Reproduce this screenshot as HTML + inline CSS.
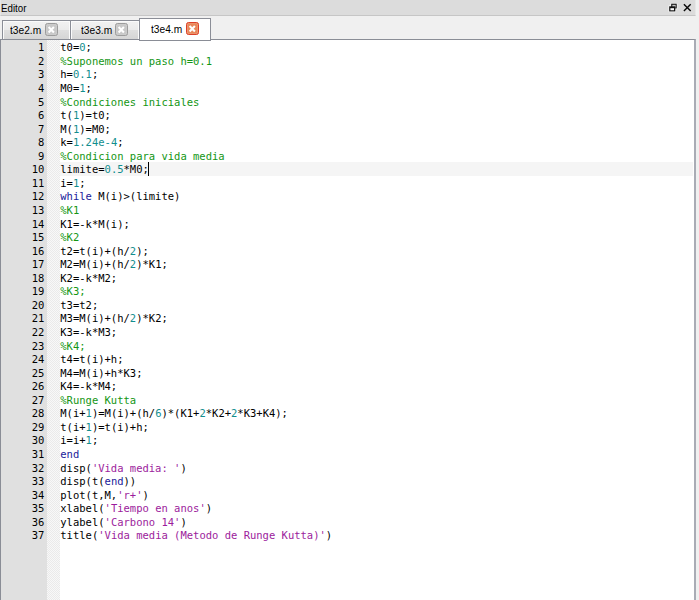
<!DOCTYPE html>
<html><head><meta charset="utf-8"><title>Editor</title>
<style>
html,body{margin:0;padding:0;}
body{width:699px;height:600px;background:#f0f0f0;position:relative;overflow:hidden;font-family:"Liberation Sans",sans-serif;font-size:11px;color:#000;}
.title{position:absolute;left:0;top:0;width:696.3px;border-right:1.7px solid #e7e7e7;height:15px;background:#dcdcdc;border-bottom:1px solid #c6c6c6;border-left:1px solid #e6e6e6;box-sizing:border-box;height:16px;}
.title span{position:absolute;left:0.2px;top:2px;line-height:13px;font-size:11px;transform:scaleX(0.885);transform-origin:0 0;}
.ico{position:absolute;top:0;left:0;}
.tab{position:absolute;box-sizing:border-box;border:1px solid #8b8e97;border-bottom:none;background:linear-gradient(#f2f2f2 0,#ebebeb 48%,#dfdfdf 52%,#d5d5d5 100%);box-shadow:inset 1px 1px 0 #fbfbfb,inset -1px 0 0 #fbfbfb;}
.tab.act{background:#fff;box-shadow:none;}
.tab .t{position:absolute;top:0;line-height:13px;font-size:11px;white-space:nowrap;transform:scaleX(0.925);transform-origin:0 0;}
.cb{position:absolute;box-sizing:border-box;width:12.8px;height:12.8px;border:1.3px solid #9c9c9c;border-radius:2.5px;background:#c8c8c8;box-shadow:inset 0 0 0 0.6px #cecece;}
.cb.red{border-color:#dc4028;background:#e8875a;box-shadow:inset 0 0 0 0.6px #eda07c;}
.cb svg{position:absolute;left:-1.2px;top:-1.2px;}
.ed{position:absolute;left:0;top:39px;width:696.2px;height:570px;box-sizing:border-box;border:1.4px solid #8a8d96;border-left-width:1.2px;border-right:2.2px solid #a9acb5;background:#fff;}
.gut{position:absolute;left:1px;top:40px;width:45.6px;height:560px;background:#e0e0e0;}
.fold{position:absolute;left:46.6px;top:40px;width:13.1px;height:560px;background-color:#efefef;
background-image:linear-gradient(45deg,#eaeaea 25%,transparent 25%,transparent 75%,#eaeaea 75%),linear-gradient(45deg,#eaeaea 25%,#f8f8f8 25%,#f8f8f8 75%,#eaeaea 75%);background-size:2px 2px;background-position:0 0,1px 1px;}
.ln{position:absolute;left:0;width:693px;height:13.556px;line-height:13.556px;font-family:"DejaVu Sans Mono","Liberation Mono",monospace;font-size:10.5px;white-space:pre;}
.ln.cur:before{content:"";position:absolute;left:59.7px;right:0;top:0;height:13.5px;background:#f5f5f5;}
.num{position:absolute;left:0;width:44.3px;text-align:right;top:1px;}
.code{position:absolute;left:60.3px;top:1px;}
.c{color:#149614}.n{color:#128e8e}.k{color:#1a1a9a}.s{color:#9c1c9c}
.caret{position:absolute;display:block;width:1.2px;height:13.4px;background:#000;right:-0.4px;top:-1px;}
</style></head><body>
<div class="title"><span>Editor</span></div>
<svg class="ico" width="699" height="16" viewBox="0 0 699 16">
<g fill="#f2f2f2" stroke="#f2f2f2" stroke-width="1.6" stroke-linejoin="round">
<rect x="671.2" y="3.9" width="5.5" height="4.5"/>
<rect x="669.2" y="6.1" width="6.1" height="5.3"/>
</g>
<rect x="671.2" y="3.7" width="5.5" height="4.7" fill="#111"/>
<rect x="672.3" y="4.8" width="3.4" height="2.8" fill="#c4c4c4"/>
<rect x="669.2" y="6.3" width="6.1" height="5.1" fill="#111"/>
<rect x="670.4" y="8.2" width="3.6" height="2.1" fill="#f8f8f8"/>
<path d="M683.9 4.3 L690.7 10.9 M690.7 4.3 L683.9 10.9" stroke="#0a0a0a" stroke-width="1.45" fill="none"/>
</svg>
<div class="tab" style="left:2px;top:20px;width:69px;height:19px"><span class="t" style="left:7.2px;top:3.2px">t3e2.m</span>
<div class="cb" style="left:42.1px;top:2.1px"><svg width="12.8" height="12.8" viewBox="0 0 12.8 12.8"><path d="M3.6 4.1L8.9 9.4M8.9 4.1L3.6 9.4" stroke="#fff" stroke-width="2.1" fill="none"/></svg></div></div>
<div class="tab" style="left:70px;top:20px;width:70px;height:19px"><span class="t" style="left:10px;top:3.2px">t3e3.m</span>
<div class="cb" style="left:44.1px;top:2.1px"><svg width="12.8" height="12.8" viewBox="0 0 12.8 12.8"><path d="M3.6 4.1L8.9 9.4M8.9 4.1L3.6 9.4" stroke="#fff" stroke-width="2.1" fill="none"/></svg></div></div>
<div class="ed"></div>
<div class="tab act" style="left:139px;top:18px;width:72px;height:22.9px;border-bottom:1.4px solid #8a8d96"><span class="t" style="left:11.2px;top:3.6px">t3e4.m</span>
<div class="cb red" style="left:45.8px;top:3px"><svg width="12.8" height="12.8" viewBox="0 0 12.8 12.8"><path d="M3.6 4.1L8.9 9.4M8.9 4.1L3.6 9.4" stroke="#fff" stroke-width="2.1" fill="none"/></svg></div></div>
<div class="gut"></div><div class="fold"></div>
<div class="ln" style="top:40.30px"><span class="num">1</span><span class="code">t0=<span class="n">0</span>;</span></div>
<div class="ln" style="top:53.86px"><span class="num">2</span><span class="code"><span class="c">%Suponemos un paso h=0.1</span></span></div>
<div class="ln" style="top:67.41px"><span class="num">3</span><span class="code">h=<span class="n">0.1</span>;</span></div>
<div class="ln" style="top:80.97px"><span class="num">4</span><span class="code">M0=<span class="n">1</span>;</span></div>
<div class="ln" style="top:94.52px"><span class="num">5</span><span class="code"><span class="c">%Condiciones iniciales</span></span></div>
<div class="ln" style="top:108.08px"><span class="num">6</span><span class="code">t(<span class="n">1</span>)=t0;</span></div>
<div class="ln" style="top:121.64px"><span class="num">7</span><span class="code">M(<span class="n">1</span>)=M0;</span></div>
<div class="ln" style="top:135.19px"><span class="num">8</span><span class="code">k=<span class="n">1.24e-4</span>;</span></div>
<div class="ln" style="top:148.75px"><span class="num">9</span><span class="code"><span class="c">%Condicion para vida media</span></span></div>
<div class="ln cur" style="top:162.30px"><span class="num">10</span><span class="code">limite=<span class="n">0.5</span>*M0;<i class="caret"></i></span></div>
<div class="ln" style="top:175.86px"><span class="num">11</span><span class="code">i=<span class="n">1</span>;</span></div>
<div class="ln" style="top:189.42px"><span class="num">12</span><span class="code"><span class="k">while</span> M(i)&gt;(limite)</span></div>
<div class="ln" style="top:202.97px"><span class="num">13</span><span class="code"><span class="c">%K1</span></span></div>
<div class="ln" style="top:216.53px"><span class="num">14</span><span class="code">K1=-k*M(i);</span></div>
<div class="ln" style="top:230.08px"><span class="num">15</span><span class="code"><span class="c">%K2</span></span></div>
<div class="ln" style="top:243.64px"><span class="num">16</span><span class="code">t2=t(i)+(h/<span class="n">2</span>);</span></div>
<div class="ln" style="top:257.20px"><span class="num">17</span><span class="code">M2=M(i)+(h/<span class="n">2</span>)*K1;</span></div>
<div class="ln" style="top:270.75px"><span class="num">18</span><span class="code">K2=-k*M2;</span></div>
<div class="ln" style="top:284.31px"><span class="num">19</span><span class="code"><span class="c">%K3;</span></span></div>
<div class="ln" style="top:297.86px"><span class="num">20</span><span class="code">t3=t2;</span></div>
<div class="ln" style="top:311.42px"><span class="num">21</span><span class="code">M3=M(i)+(h/<span class="n">2</span>)*K2;</span></div>
<div class="ln" style="top:324.98px"><span class="num">22</span><span class="code">K3=-k*M3;</span></div>
<div class="ln" style="top:338.53px"><span class="num">23</span><span class="code"><span class="c">%K4;</span></span></div>
<div class="ln" style="top:352.09px"><span class="num">24</span><span class="code">t4=t(i)+h;</span></div>
<div class="ln" style="top:365.64px"><span class="num">25</span><span class="code">M4=M(i)+h*K3;</span></div>
<div class="ln" style="top:379.20px"><span class="num">26</span><span class="code">K4=-k*M4;</span></div>
<div class="ln" style="top:392.76px"><span class="num">27</span><span class="code"><span class="c">%Runge Kutta</span></span></div>
<div class="ln" style="top:406.31px"><span class="num">28</span><span class="code">M(i+<span class="n">1</span>)=M(i)+(h/<span class="n">6</span>)*(K1+<span class="n">2</span>*K2+<span class="n">2</span>*K3+K4);</span></div>
<div class="ln" style="top:419.87px"><span class="num">29</span><span class="code">t(i+<span class="n">1</span>)=t(i)+h;</span></div>
<div class="ln" style="top:433.42px"><span class="num">30</span><span class="code">i=i+<span class="n">1</span>;</span></div>
<div class="ln" style="top:446.98px"><span class="num">31</span><span class="code"><span class="k">end</span></span></div>
<div class="ln" style="top:460.54px"><span class="num">32</span><span class="code">disp(<span class="s">&#x27;Vida media: &#x27;</span>)</span></div>
<div class="ln" style="top:474.09px"><span class="num">33</span><span class="code">disp(t(<span class="k">end</span>))</span></div>
<div class="ln" style="top:487.65px"><span class="num">34</span><span class="code">plot(t,M,<span class="s">&#x27;r+&#x27;</span>)</span></div>
<div class="ln" style="top:501.20px"><span class="num">35</span><span class="code">xlabel(<span class="s">&#x27;Tiempo en anos&#x27;</span>)</span></div>
<div class="ln" style="top:514.76px"><span class="num">36</span><span class="code">ylabel(<span class="s">&#x27;Carbono 14&#x27;</span>)</span></div>
<div class="ln" style="top:528.32px"><span class="num">37</span><span class="code">title(<span class="s">&#x27;Vida media (Metodo de Runge Kutta)&#x27;</span>)</span></div>
</body></html>
